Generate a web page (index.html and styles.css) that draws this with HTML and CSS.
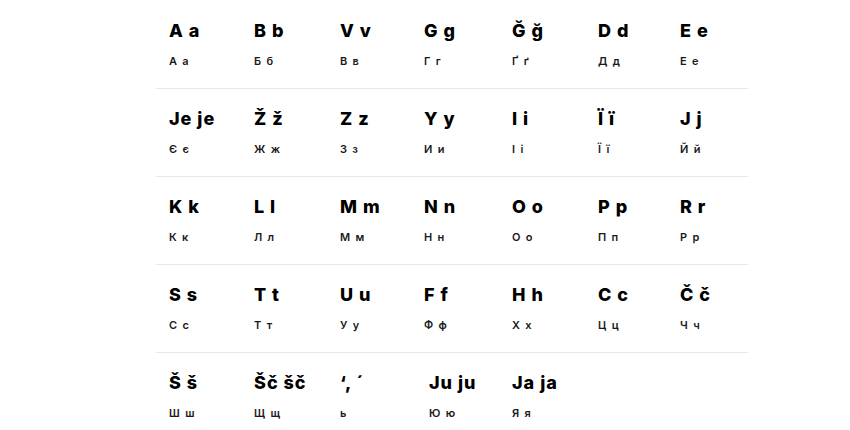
FILE: index.html
```html
<!DOCTYPE html>
<html lang="uk">
<head>
<meta charset="utf-8">
<title>Alphabet</title>
<link rel="stylesheet" href="styles.css">
</head>
<body>
<div class="table">
  <div class="row">
    <div class="cell"><div class="lat">A a</div><div class="cyr">А а</div></div>
    <div class="cell"><div class="lat">B b</div><div class="cyr">Б б</div></div>
    <div class="cell"><div class="lat">V v</div><div class="cyr">В в</div></div>
    <div class="cell"><div class="lat">G g</div><div class="cyr">Г г</div></div>
    <div class="cell"><div class="lat">Ğ ğ</div><div class="cyr">Ґ ґ</div></div>
    <div class="cell"><div class="lat">D d</div><div class="cyr">Д д</div></div>
    <div class="cell"><div class="lat">E e</div><div class="cyr">Е е</div></div>
  </div>
  <div class="row">
    <div class="cell"><div class="lat">Je je</div><div class="cyr">Є є</div></div>
    <div class="cell"><div class="lat">Ž ž</div><div class="cyr">Ж ж</div></div>
    <div class="cell"><div class="lat">Z z</div><div class="cyr">З з</div></div>
    <div class="cell"><div class="lat">Y y</div><div class="cyr">И и</div></div>
    <div class="cell"><div class="lat">I i</div><div class="cyr">І і</div></div>
    <div class="cell"><div class="lat">Ï ï</div><div class="cyr">Ї ї</div></div>
    <div class="cell"><div class="lat">J j</div><div class="cyr">Й й</div></div>
  </div>
  <div class="row">
    <div class="cell"><div class="lat">K k</div><div class="cyr">К к</div></div>
    <div class="cell"><div class="lat">L l</div><div class="cyr">Л л</div></div>
    <div class="cell"><div class="lat">M m</div><div class="cyr">М м</div></div>
    <div class="cell"><div class="lat">N n</div><div class="cyr">Н н</div></div>
    <div class="cell"><div class="lat">O o</div><div class="cyr">О о</div></div>
    <div class="cell"><div class="lat">P p</div><div class="cyr">П п</div></div>
    <div class="cell"><div class="lat">R r</div><div class="cyr">Р р</div></div>
  </div>
  <div class="row">
    <div class="cell"><div class="lat">S s</div><div class="cyr">С с</div></div>
    <div class="cell"><div class="lat">T t</div><div class="cyr">Т т</div></div>
    <div class="cell"><div class="lat">U u</div><div class="cyr">У у</div></div>
    <div class="cell"><div class="lat">F f</div><div class="cyr">Ф ф</div></div>
    <div class="cell"><div class="lat">H h</div><div class="cyr">Х х</div></div>
    <div class="cell"><div class="lat">C c</div><div class="cyr">Ц ц</div></div>
    <div class="cell"><div class="lat">Č č</div><div class="cyr">Ч ч</div></div>
  </div>
  <div class="row last">
    <div class="cell"><div class="lat">Š š</div><div class="cyr">Ш ш</div></div>
    <div class="cell"><div class="lat">Šč šč</div><div class="cyr">Щ щ</div></div>
    <div class="cell"><div class="lat">‘, ´</div><div class="cyr">ь</div></div>
    <div class="cell indent"><div class="lat">Ju ju</div><div class="cyr">Ю ю</div></div>
    <div class="cell"><div class="lat">Ja ja</div><div class="cyr">Я я</div></div>
  </div>
</div>
</body>
</html>
```
FILE: styles.css
```css
html, body {
  margin: 0;
  padding: 0;
  background: #ffffff;
}
body {
  font-family: "Inter", "Liberation Sans", sans-serif;
  color: #000000;
}
.table {
  width: 592px;
  margin: 1px 0 0 156px;
}
.row {
  display: grid;
  grid-template-columns: 85px 86px 84px 88px 86px 82px 81px;
  padding: 19px 0 20px 13px;
  border-bottom: 1px solid #e8e8e8;
}
.row.last {
  border-bottom: none;
}
.lat {
  font-size: 18px;
  line-height: 22px;
  font-weight: 800;
  letter-spacing: 1px;
  white-space: nowrap;
}
.cyr {
  margin-top: 12px;
  font-size: 11px;
  line-height: 14px;
  font-weight: 600;
  letter-spacing: 1.3px;
  color: #1a1a1a;
  white-space: nowrap;
}
.indent {
  padding-left: 5px;
}
```
